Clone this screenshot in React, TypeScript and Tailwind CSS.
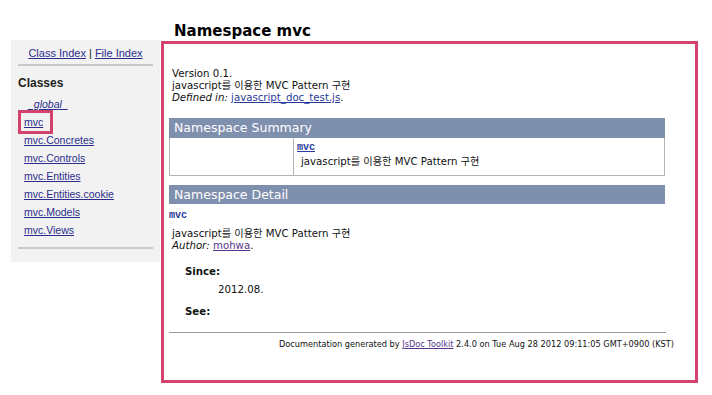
import React from 'react';

const sans = { fontFamily: '"Liberation Sans", Arial, sans-serif' };
const doc = { fontFamily: '"DejaVu Sans", "Noto Sans CJK KR", sans-serif' };

const classes = [
  'mvc.Concretes',
  'mvc.Controls',
  'mvc.Entities',
  'mvc.Entities.cookie',
  'mvc.Models',
  'mvc.Views',
];

const App: React.FC = () => {
  return (
    <div className="w-[712px] h-[395px] bg-white flex pl-[11px] overflow-hidden">
      {/* Sidebar */}
      <div className="mt-[40px] w-[149px] h-[222px] bg-[#f2f2f2] px-[7px] pt-[6px] text-[10.5px]" style={sans}>
        <div className="text-center text-[11px] leading-[14px] text-[#222]">
          <a className="underline text-[#2c2c8c]">Class Index</a> | <a className="underline text-[#2c2c8c]">File Index</a>
        </div>
        <hr className="mt-[4px] border-t-2 border-[#c8c8c8]" />
        <div className="mt-[10px] font-bold text-[12px] leading-[14px] text-[#222]">Classes</div>
        <div className="relative mt-[5px] pl-[6px] flex flex-col">
          <a className="h-[18px] leading-[18px] italic underline text-[#2c2c8c] pl-[4px]">_global_</a>
          <a className="h-[18px] leading-[18px] underline text-[#2c2c8c]">mvc</a>
          {classes.map((c) => (
            <a key={c} className="h-[18px] leading-[18px] underline text-[#2c2c8c]">
              {c}
            </a>
          ))}
          <div className="absolute left-[0px] top-[15px] w-[35px] h-[24px] border-[3px] border-[#d3436d]" />
        </div>
        <hr className="mt-[8px] border-t-2 border-[#c8c8c8]" />
      </div>

      {/* Main */}
      <div className="ml-[1px] flex flex-col">
        <h1 className="h-[20px] pl-[13px] mt-[21px] text-[15px] leading-[20px] font-bold text-black" style={doc}>
          Namespace mvc
        </h1>
        <div className="w-[537px] h-[342px] border-[3px] border-[#d3436d] pl-[5px] pt-[24px] text-[10.2px] leading-[12px] text-[#111]" style={doc}>
          <div className="pl-[3px]">
            <div>Version 0.1.</div>
            <div>javascript를 이용한 MVC Pattern 구현</div>
            <div>
              <i>Defined in:</i> <a className="underline text-[#2a3a9a]">javascript_doc_test.js</a>.
            </div>
          </div>

          <div className="mt-[14px] w-[496px]">
            <div className="h-[20px] bg-[#7f8fae] text-white text-[12.5px] leading-[20px] pl-[5px]">Namespace Summary</div>
            <div className="flex h-[38px] border border-t-0 border-[#b4b4b4]">
              <div className="w-[124px] border-r border-[#b4b4b4]" />
              <div className="pl-[3px] pt-[4px]">
                <a className="block font-bold underline text-[#2a3a9a] text-[10px] leading-[12px]" style={{ fontFamily: '"Liberation Mono", monospace' }}>
                  mvc
                </a>
                <div className="mt-[2px] pl-[4px]">javascript를 이용한 MVC Pattern 구현</div>
              </div>
            </div>
          </div>

          <div className="mt-[9px] w-[496px] h-[19px] bg-[#7f8fae] text-white text-[12.5px] leading-[19px] pl-[5px]">Namespace Detail</div>

          <div className="mt-[6px]">
            <div className="font-bold text-[#2a3a9a] text-[10px] leading-[12px]" style={{ fontFamily: '"Liberation Mono", monospace' }}>
              mvc
            </div>
            <div className="pl-[3px] mt-[6px]">
              <div>javascript를 이용한 MVC Pattern 구현</div>
              <div>
                <i>Author:</i> <a className="underline text-[#55358a]">mohwa</a>.
              </div>
            </div>
            <div className="pl-[16px] mt-[14px] font-bold">Since:</div>
            <div className="pl-[49px] mt-[6px]">2012.08.</div>
            <div className="pl-[16px] mt-[10px] font-bold">See:</div>
          </div>

          <hr className="mt-[14px] w-[497px] border-t border-[#9a9a9a]" />
          <div className="w-[505px] mt-[5px] text-right text-[8.2px] leading-[12px]">
            Documentation generated by <a className="underline text-[#55358a]">JsDoc Toolkit</a> 2.4.0 on Tue Aug 28 2012 09:11:05 GMT+0900 (KST)
          </div>
        </div>
      </div>
    </div>
  );
};

export default App;
